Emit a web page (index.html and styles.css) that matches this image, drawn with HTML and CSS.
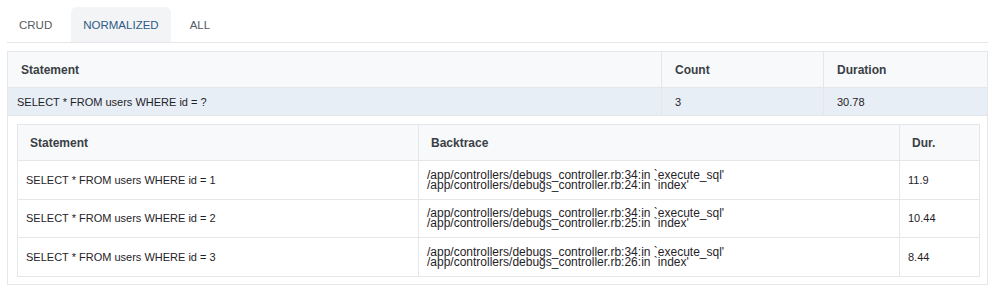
FILE: index.html
```html
<!DOCTYPE html>
<html lang="en">

<head>
    <meta charset="UTF-8">
    <title>Queries</title>
    <link rel="stylesheet" href="styles.css">
</head>

<body>

    <nav class="tabs">
        <a class="tab">CRUD</a>
        <a class="tab active">NORMALIZED</a>
        <a class="tab">ALL</a>
    </nav>

    <table class="queries">
        <colgroup>
            <col style="width: 654px">
            <col style="width: 162px">
            <col>
        </colgroup>
        <thead>
            <tr>
                <th>Statement</th>
                <th>Count</th>
                <th>Duration</th>
            </tr>
        </thead>
        <tbody>
            <tr class="group-row">
                <td class="statement">SELECT * FROM users WHERE id = ?</td>
                <td>3</td>
                <td>30.78</td>
            </tr>
            <tr class="details-row">
                <td colspan="3">
                    <table class="details">
                        <colgroup>
                            <col style="width: 401px">
                            <col style="width: 481px">
                            <col>
                        </colgroup>
                        <thead>
                            <tr>
                                <th>Statement</th>
                                <th>Backtrace</th>
                                <th>Dur.</th>
                            </tr>
                        </thead>
                        <tbody>
                            <tr>
                                <td>SELECT * FROM users WHERE id = 1</td>
                                <td class="trace">
                                    <span>/app/controllers/debugs_controller.rb:34:in `execute_sql'</span>
                                    <span>/app/controllers/debugs_controller.rb:24:in `index'</span>
                                </td>
                                <td>11.9</td>
                            </tr>
                            <tr>
                                <td>SELECT * FROM users WHERE id = 2</td>
                                <td class="trace">
                                    <span>/app/controllers/debugs_controller.rb:34:in `execute_sql'</span>
                                    <span>/app/controllers/debugs_controller.rb:25:in `index'</span>
                                </td>
                                <td>10.44</td>
                            </tr>
                            <tr>
                                <td>SELECT * FROM users WHERE id = 3</td>
                                <td class="trace">
                                    <span>/app/controllers/debugs_controller.rb:34:in `execute_sql'</span>
                                    <span>/app/controllers/debugs_controller.rb:26:in `index'</span>
                                </td>
                                <td>8.44</td>
                            </tr>
                        </tbody>
                    </table>
                </td>
            </tr>
        </tbody>
    </table>

</body>

</html>
```

FILE: styles.css
```css
* {
    margin: 0;
    padding: 0;
    box-sizing: border-box;
    font-family: 'Liberation Sans', Arial, sans-serif;
}

body {
    background: #fff;
    color: #222;
    padding: 7px 8px 0 7px;
}

.tabs {
    display: flex;
    gap: 7px;
    border-bottom: 1px solid #e4e6e9;
    margin-bottom: 8px;
}

.tab {
    font-size: 11.5px;
    color: #555b61;
    padding: 0 12px;
    height: 35px;
    line-height: 36px;
    border-radius: 6px 6px 0 0;
    cursor: pointer;
}

.tab.active {
    background: #f3f4f6;
    color: #2e5b86;
}

table {
    width: 100%;
    border-collapse: collapse;
    table-layout: fixed;
}

.queries {
    border: 1px solid #e4e6e9;
}

th {
    background: #f8f9fb;
    font-size: 12px;
    font-weight: bold;
    color: #3a3f45;
    text-align: left;
    height: 36px;
    padding: 0 13px;
    border: 1px solid #e4e6e9;
}

td {
    font-size: 11px;
    color: #1f2328;
    text-align: left;
    padding: 0 13px;
    border: 1px solid #e4e6e9;
}

.group-row td {
    background: #e7eef6;
    height: 28px;
}

.group-row td.statement {
    padding-left: 9px;
}

.details-row > td {
    padding: 8px 7px 7px 9px;
}

.details th {
    padding: 0 12px;
}

.details td {
    height: 38.5px;
    padding: 0 8px;
}

.details td.trace span {
    display: block;
    font-size: 12px;
    line-height: 10px;
    white-space: nowrap;
}
```
